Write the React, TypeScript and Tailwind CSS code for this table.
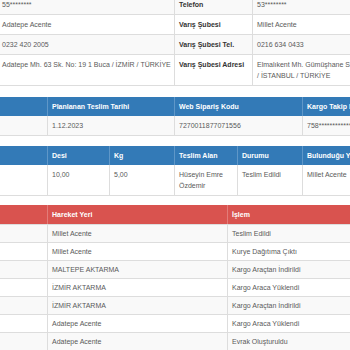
const font = { fontFamily: '"Liberation Sans", Arial, sans-serif' };

function Cell({ children, className = "" }: { children?: React.ReactNode; className?: string }) {
  return <div className={`px-[4px] py-[4px] leading-[11px] ${className}`}>{children}</div>;
}

const moves = [
  ["Millet Acente", "Teslim Edildi"],
  ["Millet Acente", "Kurye Dağıtıma Çıktı"],
  ["MALTEPE AKTARMA", "Kargo Araçtan İndirildi"],
  ["İZMİR AKTARMA", "Kargo Araca Yüklendi"],
  ["İZMİR AKTARMA", "Kargo Araçtan İndirildi"],
  ["Adatepe Acente", "Kargo Araca Yüklendi"],
  ["Adatepe Acente", "Evrak Oluşturuldu"],
];

export default function App() {
  return (
    <div className="w-[350px] h-[350px] overflow-hidden bg-white text-[7px] text-[#5a5a5a]" style={font}>
      {/* alıcı / varış bilgileri */}
      <div className="w-[460px] -mt-[5px] border-b border-[#ddd]">
        <div className="grid grid-cols-[175px_78px_1fr] bg-[#f9f9f9]">
          <Cell className="pl-[2px] border-r border-[#ddd]">55********</Cell>
          <Cell className="border-r border-[#ddd] font-bold text-[#333]">Telefon</Cell>
          <Cell>53********</Cell>
        </div>
        <div className="grid grid-cols-[175px_78px_1fr] border-t border-[#ddd]">
          <Cell className="pl-[2px] border-r border-[#ddd]">Adatepe Acente</Cell>
          <Cell className="border-r border-[#ddd] font-bold text-[#333]">Varış Şubesi</Cell>
          <Cell>Millet Acente</Cell>
        </div>
        <div className="grid grid-cols-[175px_78px_1fr] border-t border-[#ddd] bg-[#f9f9f9]">
          <Cell className="pl-[2px] border-r border-[#ddd]">0232 420 2005</Cell>
          <Cell className="border-r border-[#ddd] font-bold text-[#333]">Varış Şubesi Tel.</Cell>
          <Cell>0216 634 0433</Cell>
        </div>
        <div className="grid grid-cols-[175px_78px_1fr] border-t border-[#ddd]">
          <Cell className="pl-[2px] border-r border-[#ddd] whitespace-nowrap overflow-hidden">
            Adatepe Mh. 63 Sk. No: 19 1 Buca / İZMİR / TÜRKİYE
          </Cell>
          <Cell className="border-r border-[#ddd] font-bold text-[#333]">Varış Şubesi Adresi</Cell>
          <Cell className="whitespace-nowrap">
            Elmalıkent Mh. Gümüşhane Sokak No: 12
            <br />/ İSTANBUL / TÜRKİYE
          </Cell>
        </div>
      </div>

      {/* teslim tarihi */}
      <div className="w-[460px] mt-[11px] border-b border-[#ddd]">
        <div className="grid grid-cols-[48px_127px_128px_1fr] bg-[#337ab7] text-white font-bold">
          <Cell className="border-r border-[#5f97c8]" />
          <Cell className="border-r border-[#5f97c8]">Planlanan Teslim Tarihi</Cell>
          <Cell className="border-r border-[#5f97c8]">Web Sipariş Kodu</Cell>
          <Cell>Kargo Takip No</Cell>
        </div>
        <div className="grid grid-cols-[48px_127px_128px_1fr] bg-[#f9f9f9]">
          <Cell className="border-r border-[#ddd]" />
          <Cell className="border-r border-[#ddd]">1.12.2023</Cell>
          <Cell className="border-r border-[#ddd]">7270011877071556</Cell>
          <Cell>758************</Cell>
        </div>
      </div>

      {/* gönderi durumu */}
      <div className="w-[460px] mt-[10px] border-b border-[#ddd]">
        <div className="grid grid-cols-[48px_62px_65px_63px_65px_1fr] bg-[#337ab7] text-white font-bold">
          <Cell className="border-r border-[#5f97c8]" />
          <Cell className="border-r border-[#5f97c8]">Desi</Cell>
          <Cell className="border-r border-[#5f97c8]">Kg</Cell>
          <Cell className="border-r border-[#5f97c8]">Teslim Alan</Cell>
          <Cell className="border-r border-[#5f97c8]">Durumu</Cell>
          <Cell>Bulunduğu Yer</Cell>
        </div>
        <div className="grid grid-cols-[48px_62px_65px_63px_65px_1fr]">
          <Cell className="border-r border-[#ddd]" />
          <Cell className="border-r border-[#ddd]">10,00</Cell>
          <Cell className="border-r border-[#ddd]">5,00</Cell>
          <Cell className="border-r border-[#ddd]">Hüseyin Emre Özdemir</Cell>
          <Cell className="border-r border-[#ddd]">Teslim Edildi</Cell>
          <Cell>Millet Acente</Cell>
        </div>
      </div>

      {/* hareketler */}
      <div className="w-[460px] mt-[9px]">
        <div className="grid grid-cols-[48px_180px_1fr] bg-[#d9534f] text-white font-bold">
          <Cell className="border-r border-[#e27c79]" />
          <Cell className="border-r border-[#e27c79]">Hareket Yeri</Cell>
          <Cell>İşlem</Cell>
        </div>
        {moves.map(([place, op], i) => (
          <div
            key={i}
            className={`grid grid-cols-[48px_180px_1fr] border-t border-[#ddd] ${i % 2 === 0 ? "bg-[#f9f9f9]" : "bg-white"}`}
          >
            <div className="border-r border-[#ddd]" />
            <div className="px-[4px] py-[3px] leading-[11px] border-r border-[#ddd]">{place}</div>
            <div className="px-[4px] py-[3px] leading-[11px]">{op}</div>
          </div>
        ))}
      </div>
    </div>
  );
}
